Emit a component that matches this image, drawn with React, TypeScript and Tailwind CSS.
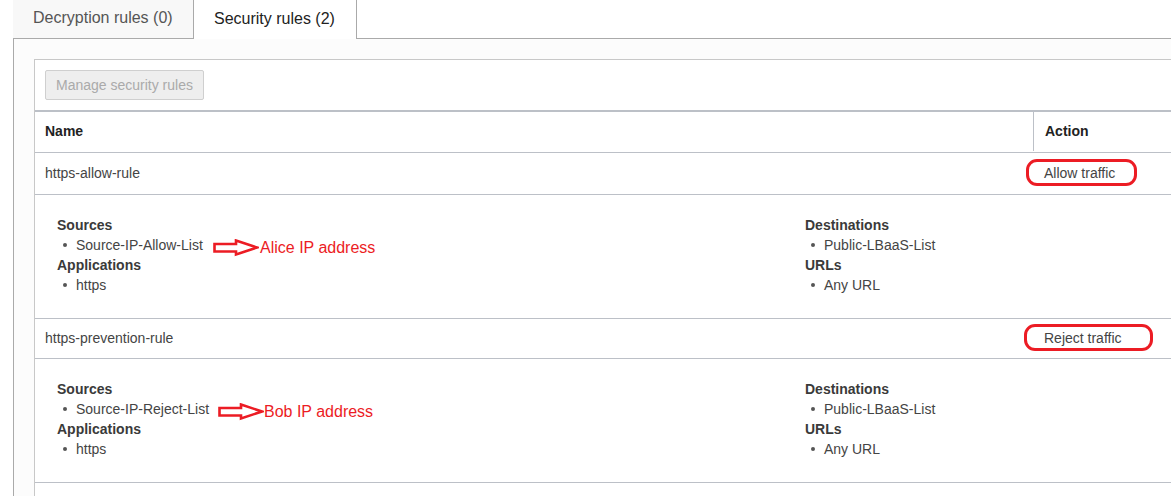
const rules = [
  {
    name: 'https-allow-rule',
    action: 'Allow traffic',
    source: 'Source-IP-Allow-List',
    rowH: 'h-[42px]',
  },
  {
    name: 'https-prevention-rule',
    action: 'Reject traffic',
    source: 'Source-IP-Reject-List',
    rowH: 'h-[40px]',
  },
]

function Item({ children }: { children: React.ReactNode }) {
  return (
    <div className="flex items-center h-[20px] pl-[6px] text-[#444]">
      <span className="w-[4px] h-[4px] rounded-full bg-[#555] mr-[9px]" />
      {children}
    </div>
  )
}

function Heading({ children }: { children: React.ReactNode }) {
  return <div className="h-[20px] leading-[20px] font-bold text-[#3a3a3a]">{children}</div>
}

function Arrow() {
  return (
    <svg width="46" height="18" viewBox="0 0 46 18" fill="none">
      <path
        d="M1.5 5 H23 V1.5 L44 8.5 L23 15.5 V12.5 H1.5 Z"
        stroke="#ec1c24"
        strokeWidth="2.6"
        strokeLinejoin="miter"
      />
    </svg>
  )
}

export default function App() {
  return (
    <div className="relative w-[1171px] h-[496px] overflow-hidden bg-white font-['Liberation_Sans',Arial,sans-serif] text-[14px]">
      {/* Tabs */}
      <div className="flex items-end h-[39px] pl-[13px]">
        <div className="w-[180px] h-[39px] bg-[#f8f8f8] border-b border-[#aaa] pl-[20px] pt-[6px] text-[16px] text-[#555]">
          Decryption rules (0)
        </div>
        <div className="w-[164px] h-[39px] bg-white border-x border-[#aaa] pl-[20px] pt-[7px] text-[16px] text-[#222]">
          Security rules (2)
        </div>
        <div className="flex-1 h-[39px] border-b border-[#aaa]" />
      </div>

      {/* Panel */}
      <div className="ml-[13px] border-l border-[#aaa] bg-[#fcfcfc] pt-[20px] pl-[20px] h-[500px]">
        <div className="w-[1200px] border-l border-t border-[#c8c8c8] bg-white">
          <div className="h-[50px] pt-[10px] pl-[10px]">
            <button className="h-[30px] w-[159px] rounded-[2px] border border-[#cfcfcf] bg-[#eee] text-[#aaa] text-[14px] text-left pl-[10px]">
              Manage security rules
            </button>
          </div>

          <div className="flex h-[43px] pb-[1px] border-t-2 border-b border-[#bcc0c7] font-bold text-[#222]">
            <div className="w-[998px] pl-[10px] flex items-center">Name</div>
            <div className="flex-1 border-l border-[#bcc0c7] pl-[11px] flex items-center">Action</div>
          </div>

          {rules.map((r) => (
            <div key={r.name}>
              <div className={`flex ${r.rowH} border-b border-[#bcc0c7] text-[#444]`}>
                <div className="w-[998px] pl-[10px] flex items-center">{r.name}</div>
                <div className="flex-1 pl-[11px] flex items-center">{r.action}</div>
              </div>
              <div className="h-[124px] border-b border-[#bcc0c7] pt-[20px] pl-[22px] grid grid-cols-[748px_1fr]">
                <div>
                  <Heading>Sources</Heading>
                  <Item>{r.source}</Item>
                  <Heading>Applications</Heading>
                  <Item>https</Item>
                </div>
                <div>
                  <Heading>Destinations</Heading>
                  <Item>Public-LBaaS-List</Item>
                  <Heading>URLs</Heading>
                  <Item>Any URL</Item>
                </div>
              </div>
            </div>
          ))}
          <div className="h-[40px]" />
        </div>
      </div>

      {/* Annotations */}
      <div className="absolute left-[1026px] top-[159px] w-[111px] h-[27px] border-[3px] border-[#ec1c24] rounded-[11px]" />
      <div className="absolute left-[1024px] top-[324px] w-[129px] h-[27px] border-[3px] border-[#ec1c24] rounded-[11px]" />

      <div className="absolute left-[213px] top-[239px] flex items-center">
        <Arrow />
        <span className="ml-[1px] text-[16px] text-[#ec1c24] leading-[18px]">Alice IP address</span>
      </div>
      <div className="absolute left-[218px] top-[403px] flex items-center">
        <Arrow />
        <span className="ml-[0px] text-[16px] text-[#ec1c24] leading-[18px]">Bob IP address</span>
      </div>
    </div>
  )
}
